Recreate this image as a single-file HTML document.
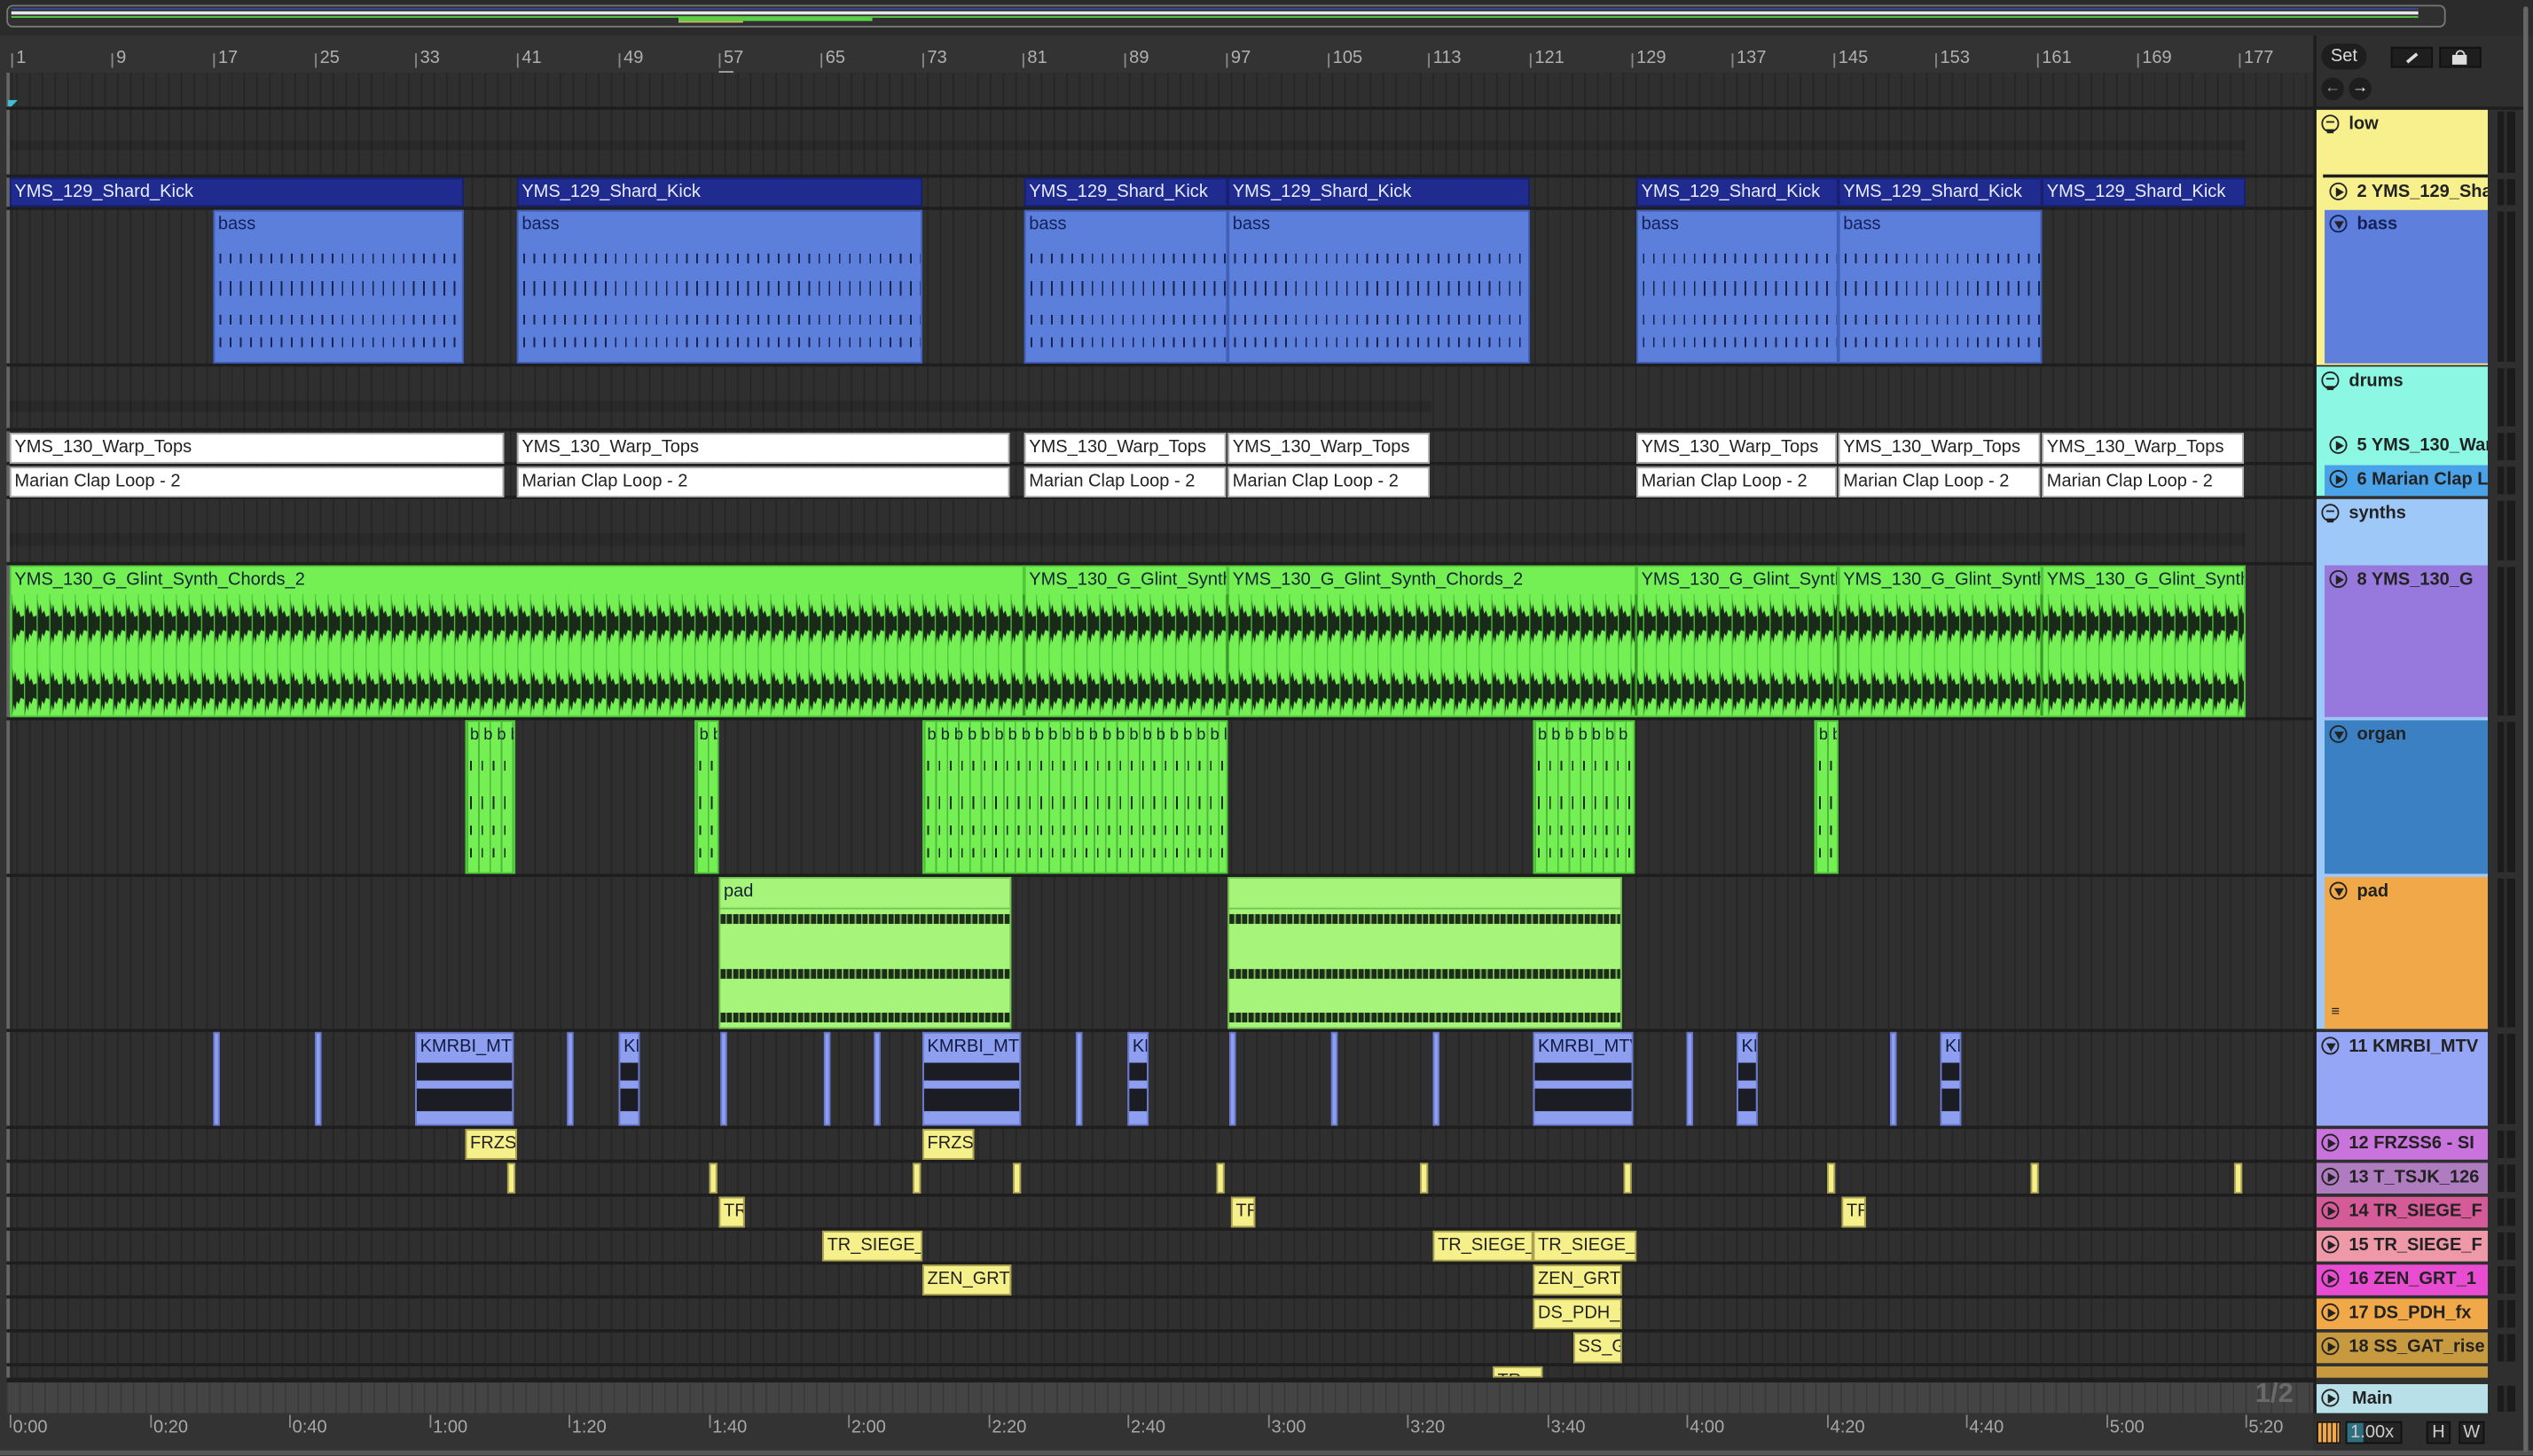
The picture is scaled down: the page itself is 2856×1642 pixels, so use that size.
<!DOCTYPE html>
<html><head><meta charset="utf-8">
<style>
html,body{margin:0;padding:0;background:#2a2a2a;overflow:hidden;width:2856px;height:1642px}
#w{position:absolute;left:0;top:0;width:1568px;height:901.5px;transform:scale(1.82143);transform-origin:0 0;background:#333;font-family:"Liberation Sans",sans-serif;overflow:hidden}
.a{position:absolute;box-sizing:border-box}
.k{position:absolute;box-sizing:border-box;overflow:hidden;white-space:nowrap;font-size:11px;line-height:17px;padding-left:2px}
.b2{background:#1f2b8f;color:#e8ecff;border:1px solid #16206e;height:18px;top:110px}
.bs{top:130px;height:95px;background:#5b7fdb;color:#13205a;border:1px solid #3f5fb8}
.bs .bd{position:absolute;left:0;right:0;top:18px;bottom:0;border-top:1px solid #3f5fb8;
 background:repeating-linear-gradient(90deg,transparent 0 3px,#1a2350 3px 4px,transparent 4px 6.3px);
 -webkit-mask:linear-gradient(180deg,transparent 0 8px,#000 8px 14px,transparent 14px 25px,#000 25px 34px,transparent 34px 46px,#000 46px 52px,transparent 52px 60px,#000 60px 66px,transparent 66px)}
.wt{background:#fff;color:#222;border:1px solid #aaa;height:19px;line-height:17px}
.gs{top:350px;height:94px;background:#74f055;color:#123;border:1px solid #4fc73a}
.og{top:446px;height:95px;background:#74f055;border:1px solid #4fc73a;
 background-image:repeating-linear-gradient(90deg,#4fb83a 0 1px,transparent 1px 7px);font-size:10px;color:#123}
.og .bd{position:absolute;left:0;right:0;top:18px;bottom:0;background:repeating-linear-gradient(90deg,transparent 0 2px,#1a2a18 2px 3px,transparent 3px 7px);
 -webkit-mask:linear-gradient(180deg,transparent 0 6px,#000 6px 12px,transparent 12px 28px,#000 28px 36px,transparent 36px 46px,#000 46px 52px,transparent 52px 60px,#000 60px 66px,transparent 66px)}
.pd{top:543px;height:94px;background:#a6f57a;border:1px solid #6fc750;color:#123}
.pd .s{position:absolute;left:0;right:0;height:6px;background:repeating-linear-gradient(90deg,#1e2a1a 0 3px,#6fb850 3px 4px)}
.km{top:639px;height:58px;background:#8f9ff0;border:1px solid #6a7ad0;color:#111a40}
.km .bd{position:absolute;left:0;right:0;top:18px;height:11px;background:#1c1c24}
.km .bd2{position:absolute;left:0;right:0;top:34px;height:14px;background:#1c1c24}
.y{background:#f5f08a;border:1px solid #a8a050;color:#222;height:19px;line-height:17px;font-size:11px}
.hd{position:absolute;box-sizing:border-box;font-size:11px;font-weight:bold;color:#222;white-space:nowrap;overflow:hidden;padding-left:20px;line-height:19px}
.ic{position:absolute;left:3px;top:3px;width:11px;height:11px;border:1.3px solid #222;border-radius:50%;box-sizing:border-box}
.ic.p::after{content:"";position:absolute;left:3px;top:1.8px;border-left:5px solid #222;border-top:3px solid transparent;border-bottom:3px solid transparent}
.ic.d::after{content:"";position:absolute;left:1.8px;top:3px;border-top:5px solid #222;border-left:3px solid transparent;border-right:3px solid transparent}
.ic.g::after{content:"";position:absolute;left:2px;top:2.5px;width:5px;height:4px;border-top:1px solid #222;border-bottom:1px solid #222;box-shadow:0 2px 0 -0.5px #222}
.mt{position:absolute;left:1546px;width:11px;background:repeating-linear-gradient(90deg,#1b1b1b 0 4px,#2a2a2a 4px 6px,#1b1b1b 6px 10px)}
.rn{position:absolute;top:30px;font-size:11px;color:#b0b0b0}
.rn::before{content:"";position:absolute;left:-3px;top:3px;width:1px;height:9px;background:#888}
.tn{position:absolute;top:878px;font-size:11px;color:#a8a8a8}
.tn::before{content:"";position:absolute;left:-2px;top:-2px;width:1px;height:8px;background:#888}
</style></head><body><div id="w">

<div class="a" style="left:0;top:0;width:1568px;height:22px;background:#2b2b2b"></div>
<div class="a" style="left:4px;top:3px;width:1510px;height:14px;border:1.5px solid #777;border-radius:4px;background:#303030"></div>
<div class="a" style="left:7px;top:7px;width:1490px;height:2px;background:#e8e8e8"></div>
<div class="a" style="left:7px;top:5px;width:1490px;height:1px;background:#3a48a0"></div>
<div class="a" style="left:7px;top:10px;width:1490px;height:1px;background:#5ad048"></div>
<div class="a" style="left:420px;top:11px;width:120px;height:2px;background:#5ad048"></div>
<div class="a" style="left:420px;top:13px;width:40px;height:1px;background:#c8c060"></div>

<div class="a" style="left:0;top:22px;width:1432px;height:23px;background:#333"></div>
<div class="rn" style="left:10px">1</div><div class="rn" style="left:72px">9</div><div class="rn" style="left:135px">17</div><div class="rn" style="left:198px">25</div><div class="rn" style="left:260px">33</div><div class="rn" style="left:323px">41</div><div class="rn" style="left:386px">49</div><div class="rn" style="left:448px">57</div><div class="rn" style="left:511px">65</div><div class="rn" style="left:574px">73</div><div class="rn" style="left:636px">81</div><div class="rn" style="left:699px">89</div><div class="rn" style="left:762px">97</div><div class="rn" style="left:825px">105</div><div class="rn" style="left:887px">113</div><div class="rn" style="left:950px">121</div><div class="rn" style="left:1013px">129</div><div class="rn" style="left:1075px">137</div><div class="rn" style="left:1138px">145</div><div class="rn" style="left:1201px">153</div><div class="rn" style="left:1264px">161</div><div class="rn" style="left:1326px">169</div><div class="rn" style="left:1389px">177</div>
<div class="a" style="left:445px;top:44px;width:9px;height:9px;border:1px solid #aaa"></div>

<div class="a" style="left:4px;top:45px;width:1428px;height:810px;background:#2f2f2f;background-image:repeating-linear-gradient(90deg,#262626 0 1px,transparent 1px 7.83px);background-position:6px 0"></div>
<div class="a" style="left:4px;top:45px;width:2px;height:810px;background:#666"></div>
<div class="a" style="left:5px;top:62px;border-left:6px solid #3ec0d8;border-bottom:6px solid transparent"></div>
<div class="a" style="left:4px;top:66px;width:1428px;height:2px;background:#1e1e1e"></div>
<div class="a" style="left:4px;top:108px;width:1428px;height:2px;background:#1e1e1e"></div>
<div class="a" style="left:4px;top:128px;width:1428px;height:2px;background:#1e1e1e"></div>
<div class="a" style="left:4px;top:225px;width:1428px;height:2px;background:#1e1e1e"></div>
<div class="a" style="left:4px;top:265px;width:1428px;height:2px;background:#1e1e1e"></div>
<div class="a" style="left:4px;top:286px;width:1428px;height:2px;background:#1e1e1e"></div>
<div class="a" style="left:4px;top:307px;width:1428px;height:2px;background:#1e1e1e"></div>
<div class="a" style="left:4px;top:348px;width:1428px;height:2px;background:#1e1e1e"></div>
<div class="a" style="left:4px;top:444px;width:1428px;height:2px;background:#1e1e1e"></div>
<div class="a" style="left:4px;top:541px;width:1428px;height:2px;background:#1e1e1e"></div>
<div class="a" style="left:4px;top:637px;width:1428px;height:2px;background:#1e1e1e"></div>
<div class="a" style="left:4px;top:697px;width:1428px;height:2px;background:#1e1e1e"></div>
<div class="a" style="left:4px;top:718px;width:1428px;height:2px;background:#1e1e1e"></div>
<div class="a" style="left:4px;top:739px;width:1428px;height:2px;background:#1e1e1e"></div>
<div class="a" style="left:4px;top:760px;width:1428px;height:2px;background:#1e1e1e"></div>
<div class="a" style="left:4px;top:781px;width:1428px;height:2px;background:#1e1e1e"></div>
<div class="a" style="left:4px;top:802px;width:1428px;height:2px;background:#1e1e1e"></div>
<div class="a" style="left:4px;top:823px;width:1428px;height:2px;background:#1e1e1e"></div>
<div class="a" style="left:4px;top:844px;width:1428px;height:2px;background:#1e1e1e"></div>
<div class="a" style="left:6px;top:87px;width:1384px;height:6px;background:rgba(0,0,0,.12)"></div>
<div class="a" style="left:6px;top:248px;width:880px;height:7px;background:rgba(0,0,0,.12)"></div>
<div class="a" style="left:6px;top:330px;width:1384px;height:8px;background:rgba(0,0,0,.12)"></div>

<div class="k b2" style="left:6px;width:281px">YMS_129_Shard_Kick</div>
<div class="k b2" style="left:320px;width:251px">YMS_129_Shard_Kick</div>
<div class="k b2" style="left:634px;width:126px">YMS_129_Shard_Kick</div>
<div class="k b2" style="left:760px;width:187px">YMS_129_Shard_Kick</div>
<div class="k b2" style="left:1013px;width:125px">YMS_129_Shard_Kick</div>
<div class="k b2" style="left:1138px;width:126px">YMS_129_Shard_Kick</div>
<div class="k b2" style="left:1264px;width:126px">YMS_129_Shard_Kick</div>
<div class="k bs" style="left:132px;width:155px">bass<div class="bd"></div></div>
<div class="k bs" style="left:320px;width:251px">bass<div class="bd"></div></div>
<div class="k bs" style="left:634px;width:126px">bass<div class="bd"></div></div>
<div class="k bs" style="left:760px;width:187px">bass<div class="bd"></div></div>
<div class="k bs" style="left:1013px;width:125px">bass<div class="bd"></div></div>
<div class="k bs" style="left:1138px;width:126px">bass<div class="bd"></div></div>
<div class="k wt" style="top:268px;left:6px;width:306px">YMS_130_Warp_Tops</div>
<div class="k wt" style="top:268px;left:320px;width:305px">YMS_130_Warp_Tops</div>
<div class="k wt" style="top:268px;left:634px;width:125px">YMS_130_Warp_Tops</div>
<div class="k wt" style="top:268px;left:760px;width:125px">YMS_130_Warp_Tops</div>
<div class="k wt" style="top:268px;left:1013px;width:124px">YMS_130_Warp_Tops</div>
<div class="k wt" style="top:268px;left:1138px;width:125px">YMS_130_Warp_Tops</div>
<div class="k wt" style="top:268px;left:1264px;width:125px">YMS_130_Warp_Tops</div>
<div class="k wt" style="top:289px;left:6px;width:306px">Marian Clap Loop - 2</div>
<div class="k wt" style="top:289px;left:320px;width:305px">Marian Clap Loop - 2</div>
<div class="k wt" style="top:289px;left:634px;width:125px">Marian Clap Loop - 2</div>
<div class="k wt" style="top:289px;left:760px;width:125px">Marian Clap Loop - 2</div>
<div class="k wt" style="top:289px;left:1013px;width:124px">Marian Clap Loop - 2</div>
<div class="k wt" style="top:289px;left:1138px;width:125px">Marian Clap Loop - 2</div>
<div class="k wt" style="top:289px;left:1264px;width:125px">Marian Clap Loop - 2</div>
<div class="k gs" style="left:6px;width:628px">YMS_130_G_Glint_Synth_Chords_2</div>
<div class="k gs" style="left:634px;width:126px">YMS_130_G_Glint_Synth_Chords_2</div>
<div class="k gs" style="left:760px;width:253px">YMS_130_G_Glint_Synth_Chords_2</div>
<div class="k gs" style="left:1013px;width:125px">YMS_130_G_Glint_Synth_Chords_2</div>
<div class="k gs" style="left:1138px;width:126px">YMS_130_G_Glint_Synth_Chords_2</div>
<div class="k gs" style="left:1264px;width:126px">YMS_130_G_Glint_Synth_Chords_2</div>
<svg class="a" style="left:7px;top:368px" width="1382" height="75">
<defs><pattern id="wp" width="7.83" height="75" patternUnits="userSpaceOnUse">
<path d="M0,18 L0.6,3 L1.5,10 L2.4,6 L3.4,12 L4.6,10 L5.8,14 L7.83,13 L7.83,23 L5.8,22 L4.6,26 L3.4,24 L2.4,30 L1.5,26 L0.6,33 Z M0,60 L0.6,45 L1.5,52 L2.4,48 L3.4,54 L4.6,52 L5.8,56 L7.83,55 L7.83,65 L5.8,64 L4.6,68 L3.4,66 L2.4,72 L1.5,68 L0.6,75 Z" fill="#1a2a18"/>
<rect x="0" y="0" width="0.7" height="75" fill="#4fc73a"/>
</pattern></defs>
<rect width="1382" height="75" fill="url(#wp)"/>
<rect x="626" width="1.5" height="75" fill="#3a9a2a"/><rect x="752" width="1.5" height="75" fill="#3a9a2a"/><rect x="1005" width="1.5" height="75" fill="#3a9a2a"/><rect x="1130" width="1.5" height="75" fill="#3a9a2a"/><rect x="1256" width="1.5" height="75" fill="#3a9a2a"/>
</svg>
<div class="k og" style="left:288px;width:31px">b b b b<div class="bd"></div></div>
<div class="k og" style="left:430px;width:15px">b b<div class="bd"></div></div>
<div class="k og" style="left:571px;width:189px">b b b b b b b b b b b b b b b b b b b b b b b b b b b<div class="bd"></div></div>
<div class="k og" style="left:949px;width:63px">b b b b b b b b b<div class="bd"></div></div>
<div class="k og" style="left:1123px;width:15px">b b<div class="bd"></div></div>
<div class="k pd" style="left:445px;width:181px">pad<div class="a" style="left:0;right:0;top:18px;height:1px;background:#6fc750"></div><div class="s" style="top:22px"></div><div class="s" style="top:56px"></div><div class="s" style="top:83px"></div></div>
<div class="k pd" style="left:760px;width:244px"><div class="a" style="left:0;right:0;top:18px;height:1px;background:#6fc750"></div><div class="s" style="top:22px"></div><div class="s" style="top:56px"></div><div class="s" style="top:83px"></div></div>
<div class="k km" style="left:257px;width:61px">KMRBI_MTV<div class="bd"></div><div class="bd2"></div></div>
<div class="k km" style="left:571px;width:61px">KMRBI_MTV<div class="bd"></div><div class="bd2"></div></div>
<div class="k km" style="left:949px;width:62px">KMRBI_MTV<div class="bd"></div><div class="bd2"></div></div>
<div class="k km" style="left:383px;width:13px">KM<div class="bd"></div><div class="bd2"></div></div>
<div class="k km" style="left:698px;width:13px">KM<div class="bd"></div><div class="bd2"></div></div>
<div class="k km" style="left:1075px;width:13px">KM<div class="bd"></div><div class="bd2"></div></div>
<div class="k km" style="left:1201px;width:13px">KM<div class="bd"></div><div class="bd2"></div></div>
<div class="k km" style="left:132px;width:4px"></div><div class="k km" style="left:195px;width:4px"></div><div class="k km" style="left:351px;width:4px"></div><div class="k km" style="left:446px;width:4px"></div><div class="k km" style="left:510px;width:4px"></div><div class="k km" style="left:541px;width:4px"></div><div class="k km" style="left:666px;width:4px"></div><div class="k km" style="left:761px;width:4px"></div><div class="k km" style="left:824px;width:4px"></div><div class="k km" style="left:887px;width:4px"></div><div class="k km" style="left:1044px;width:4px"></div><div class="k km" style="left:1170px;width:4px"></div>
<div class="k y" style="top:699px;left:288px;width:32px">FRZSS</div>
<div class="k y" style="top:699px;left:571px;width:32px">FRZSS</div>
<div class="k y" style="top:720px;left:314px;width:5px"></div><div class="k y" style="top:720px;left:439px;width:5px"></div><div class="k y" style="top:720px;left:565px;width:5px"></div><div class="k y" style="top:720px;left:627px;width:5px"></div><div class="k y" style="top:720px;left:753px;width:5px"></div><div class="k y" style="top:720px;left:879px;width:5px"></div><div class="k y" style="top:720px;left:1005px;width:5px"></div><div class="k y" style="top:720px;left:1131px;width:5px"></div><div class="k y" style="top:720px;left:1257px;width:5px"></div><div class="k y" style="top:720px;left:1383px;width:5px"></div>
<div class="k y" style="top:741px;left:445px;width:16px">TR</div>
<div class="k y" style="top:741px;left:762px;width:15px">TR</div>
<div class="k y" style="top:741px;left:1140px;width:15px">TR</div>
<div class="k y" style="top:762px;left:509px;width:62px">TR_SIEGE_F</div>
<div class="k y" style="top:762px;left:887px;width:62px">TR_SIEGE_F</div>
<div class="k y" style="top:762px;left:949px;width:64px">TR_SIEGE_F</div>
<div class="k y" style="top:783px;left:571px;width:55px">ZEN_GRT_1</div>
<div class="k y" style="top:783px;left:949px;width:55px">ZEN_GRT_1</div>
<div class="k y" style="top:804px;left:949px;width:55px">DS_PDH_fx</div>
<div class="k y" style="top:825px;left:974px;width:30px">SS_GAT</div>
<div class="k y" style="top:846px;left:924px;width:31px;height:7px">TR</div>

<div class="a" style="left:4px;top:853px;width:1428px;height:3px;background:#1e1e1e"></div>
<div class="a" style="left:4px;top:856px;width:1428px;height:19px;background:#444;background-image:repeating-linear-gradient(90deg,#3a3a3a 0 1px,transparent 1px 7.83px)"></div>
<div class="a" style="left:1396px;top:853px;font-size:17px;font-weight:bold;color:#6a6a6a">1/2</div>
<div class="a" style="left:0;top:875px;width:1432px;height:26px;background:#333"></div>
<div class="a" style="left:0;top:898px;width:1568px;height:3px;background:#555"></div>
<div class="tn" style="left:8px">0:00</div><div class="tn" style="left:95px">0:20</div><div class="tn" style="left:181px">0:40</div><div class="tn" style="left:268px">1:00</div><div class="tn" style="left:354px">1:20</div><div class="tn" style="left:441px">1:40</div><div class="tn" style="left:527px">2:00</div><div class="tn" style="left:614px">2:20</div><div class="tn" style="left:700px">2:40</div><div class="tn" style="left:787px">3:00</div><div class="tn" style="left:873px">3:20</div><div class="tn" style="left:960px">3:40</div><div class="tn" style="left:1046px">4:00</div><div class="tn" style="left:1133px">4:20</div><div class="tn" style="left:1219px">4:40</div><div class="tn" style="left:1306px">5:00</div><div class="tn" style="left:1392px">5:20</div>

<div class="a" style="left:1432px;top:22px;width:136px;height:876px;background:#2f2f2f"></div>
<div class="a" style="left:1432px;top:22px;width:2px;height:853px;background:#1e1e1e"></div>
<div class="a" style="left:1562px;top:4px;width:3px;height:895px;background:#666;border-radius:2px"></div>
<div class="a" style="left:1437px;top:27px;width:28px;height:16px;border-radius:8px;background:#1e1e1e;color:#ddd;font-size:11px;text-align:center;line-height:16px">Set</div>
<div class="a" style="left:1480px;top:29px;width:26px;height:13px;background:#1e1e1e;border:1px solid #111"></div>
<div class="a" style="left:1489px;top:35px;width:8px;height:1.5px;background:#ddd;transform:rotate(-40deg)"></div>
<div class="a" style="left:1510px;top:29px;width:26px;height:13px;background:#1e1e1e;border:1px solid #111"></div>
<div class="a" style="left:1518px;top:34px;width:9px;height:6px;background:#ddd"></div>
<div class="a" style="left:1519.5px;top:30.5px;width:6px;height:6px;border:1.3px solid #ddd;border-bottom:none;border-radius:3px 3px 0 0"></div>
<div class="a" style="left:1437px;top:48px;width:14px;height:14px;border-radius:50%;background:#1e1e1e;color:#999;font-size:10px;text-align:center;line-height:14px">&#8592;</div>
<div class="a" style="left:1454px;top:48px;width:14px;height:14px;border-radius:50%;background:#1e1e1e;color:#eee;font-size:10px;text-align:center;line-height:14px">&#8594;</div>
<div class="a" style="left:1432px;top:66px;width:130px;height:2px;background:#1e1e1e"></div>

<div class="hd" style="left:1434px;top:68px;width:106px;height:158px;background:#f7f08c"><span class="ic g"></span>low</div>
<div class="hd" style="left:1438px;top:108px;width:102px;height:2px;background:#1e1e1e;padding:0"></div>
<div class="hd" style="left:1439px;top:110px;width:101px;height:18px;background:#f7f08c"><span class="ic p"></span>2 YMS_129_Shard_Kick</div>
<div class="hd" style="left:1439px;top:130px;width:101px;height:95px;background:#5e80dc;color:#14205a"><span class="ic d" style="border-color:#14205a"></span>bass</div>
<div class="hd" style="left:1434px;top:227px;width:106px;height:80px;background:#8cf7e2"><span class="ic g"></span>drums</div>
<div class="hd" style="left:1439px;top:267px;width:101px;height:19px;background:#8cf7e2"><span class="ic p"></span>5 YMS_130_Warp_Tops</div>
<div class="hd" style="left:1439px;top:288px;width:101px;height:19px;background:#4aa2e8"><span class="ic p"></span>6 Marian Clap Loop</div>
<div class="hd" style="left:1434px;top:309px;width:106px;height:328px;background:#9ec8f8"><span class="ic g"></span>synths</div>
<div class="hd" style="left:1439px;top:350px;width:101px;height:94px;background:#9778dc"><span class="ic p"></span>8 YMS_130_G</div>
<div class="hd" style="left:1439px;top:446px;width:101px;height:95px;background:#3b80c2"><span class="ic d"></span>organ</div>
<div class="hd" style="left:1439px;top:543px;width:101px;height:94px;background:#f0a848"><span class="ic d"></span>pad<span style="position:absolute;left:4px;bottom:1px;font-size:9px">&#8801;</span></div>
<div class="hd" style="left:1434px;top:639px;width:106px;height:58px;background:#96a6f6"><span class="ic d"></span>11 KMRBI_MTV</div>
<div class="hd" style="left:1434px;top:699px;width:106px;height:19px;background:#c874dc"><span class="ic p"></span>12 FRZSS6 - SI</div>
<div class="hd" style="left:1434px;top:720px;width:106px;height:19px;background:#b07cc0"><span class="ic p"></span>13 T_TSJK_126</div>
<div class="hd" style="left:1434px;top:741px;width:106px;height:19px;background:#d45a98"><span class="ic p"></span>14 TR_SIEGE_F</div>
<div class="hd" style="left:1434px;top:762px;width:106px;height:19px;background:#ef98a8"><span class="ic p"></span>15 TR_SIEGE_F</div>
<div class="hd" style="left:1434px;top:783px;width:106px;height:19px;background:#e84cd0"><span class="ic p"></span>16 ZEN_GRT_1</div>
<div class="hd" style="left:1434px;top:804px;width:106px;height:19px;background:#f0a848"><span class="ic p"></span>17 DS_PDH_fx</div>
<div class="hd" style="left:1434px;top:825px;width:106px;height:19px;background:#c89a40"><span class="ic p"></span>18 SS_GAT_rise</div>
<div class="hd" style="left:1434px;top:846px;width:106px;height:7px;background:#c89a40"></div>
<div class="hd" style="left:1434px;top:857px;width:106px;height:18px;background:#b8e0e8;padding-left:22px"><span class="ic p"></span>Main</div>

<div class="mt" style="top:69px;height:38px"></div><div class="mt" style="top:111px;height:16px"></div><div class="mt" style="top:131px;height:93px"></div><div class="mt" style="top:228px;height:36px"></div><div class="mt" style="top:268px;height:17px"></div><div class="mt" style="top:289px;height:17px"></div><div class="mt" style="top:310px;height:37px"></div><div class="mt" style="top:351px;height:92px"></div><div class="mt" style="top:447px;height:93px"></div><div class="mt" style="top:544px;height:92px"></div><div class="mt" style="top:640px;height:56px"></div><div class="mt" style="top:700px;height:17px"></div><div class="mt" style="top:721px;height:17px"></div><div class="mt" style="top:742px;height:17px"></div><div class="mt" style="top:763px;height:17px"></div><div class="mt" style="top:784px;height:17px"></div><div class="mt" style="top:805px;height:17px"></div><div class="mt" style="top:826px;height:17px"></div><div class="mt" style="top:858px;height:16px"></div>

<div class="a" style="left:1432px;top:875px;width:130px;height:23px;background:#2f2f2f"></div>
<div class="a" style="left:1434px;top:880px;width:15px;height:14px;background:#f0a848;border:1px solid #111;background-image:repeating-linear-gradient(90deg,transparent 0 2px,#222 2px 3px)"></div>
<div class="a" style="left:1452px;top:880px;width:35px;height:14px;background:#242424;border:1px solid #111;color:#ccc;font-size:11px;line-height:12px;padding-left:2px"><span class="a" style="left:0;top:0;width:10px;height:12px;background:#2f6f80"></span><span style="position:relative">1.00x</span></div>
<div class="a" style="left:1502px;top:880px;width:15px;height:14px;background:#222;border:1px solid #111;color:#ccc;font-size:11px;line-height:12px;text-align:center">H</div>
<div class="a" style="left:1522px;top:880px;width:16px;height:14px;background:#222;border:1px solid #111;color:#ccc;font-size:11px;line-height:12px;text-align:center">W</div>
</div></body></html>
